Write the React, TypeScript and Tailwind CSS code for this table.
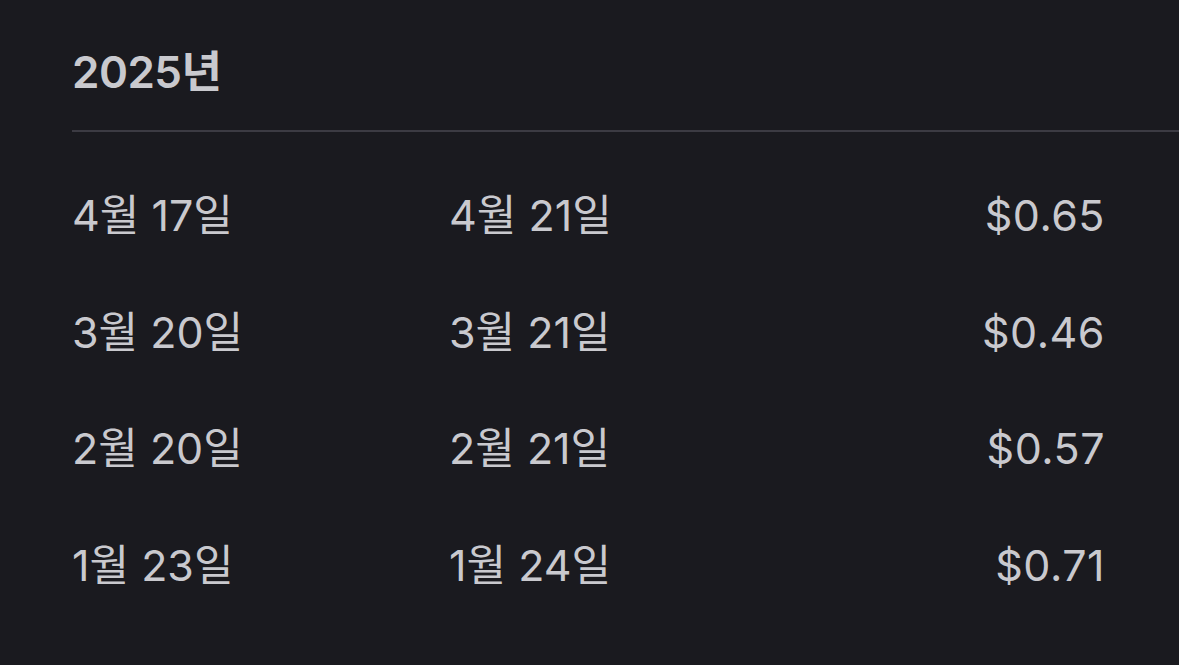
const rows = [
  ['4월 17일', '4월 21일', '$0.65'],
  ['3월 20일', '3월 21일', '$0.46'],
  ['2월 20일', '2월 21일', '$0.57'],
  ['1월 23일', '1월 24일', '$0.71'],
]

export default function App() {
  return (
    <div
      className="min-h-[665px] w-full bg-[#1a1a1f] pl-[72px] text-[#c9c9ce]"
      style={{ fontFamily: 'Inter, "Noto Sans CJK KR", sans-serif' }}
    >
      <div className="flex h-[132px] items-center pt-[14px] border-b-2 border-[#3c3b43]">
        <h2 className="text-[44px] font-semibold tracking-[-0.5px]">2025년</h2>
      </div>
      <div className="pt-[25px] pr-[74px]">
        {rows.map(([start, end, amount]) => (
          <div key={start} className="grid h-[116.5px] grid-cols-[377px_1fr_auto] items-center text-[43px]">
            <span>{start}</span>
            <span>{end}</span>
            <span className="text-right tracking-[0.5px]">{amount}</span>
          </div>
        ))}
      </div>
    </div>
  )
}
